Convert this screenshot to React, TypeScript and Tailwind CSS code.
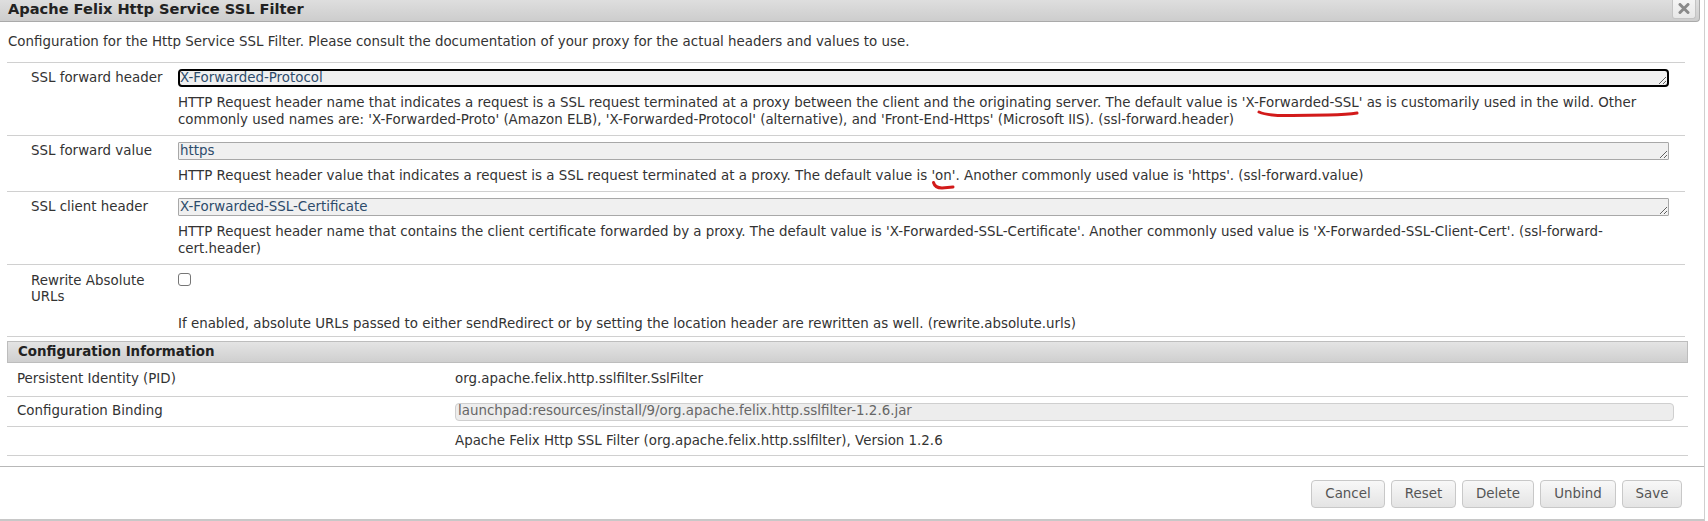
import React from 'react'

const font = "font-['DejaVu_Sans',Verdana,sans-serif]"

function Field({
  label,
  value,
  focused,
  children,
}: {
  label: string
  value: string
  focused?: boolean
  children: React.ReactNode
}) {
  return (
    <div className="flex border-b border-[#d0d0d0] pt-[6px] pb-[7px]">
      <div className="w-[171px] shrink-0 pl-[24px] leading-[17px]">{label}</div>
      <div className="flex-1 pr-[16px]">
        <textarea
          readOnly
          rows={1}
          value={value}
          className={
            focused
              ? 'block w-full h-[18px] resize-y overflow-hidden bg-[#f0f0f0] border-2 border-black rounded-[4px] px-0 py-0 leading-[14px] text-[13.4px] text-[#2d4b6b] outline-none ' + font
              : 'block w-full h-[18px] resize-y overflow-hidden bg-[#f0f0f0] border border-[#a8a8a8] rounded-[1px] pl-[1px] py-0 leading-[16px] text-[13.4px] text-[#2d4b6b] outline-none ' + font
          }
        />
        <div className="mt-[7px] leading-[17px]">{children}</div>
      </div>
    </div>
  )
}

function Mark({ children, kind }: { children: React.ReactNode; kind: 'long' | 'hook' }) {
  return (
    <span className="relative">
      {children}
      {kind === 'long' ? (
        <svg className="absolute left-[16px] top-[13px] w-[100px] h-[10px] overflow-visible" viewBox="0 0 100 10">
          <path d="M1 4 Q 10 8 34 7.5 L 70 7 Q 90 6.5 99 5" fill="none" stroke="#d21a1a" strokeWidth="3" strokeLinecap="round" />
        </svg>
      ) : (
        <svg className="absolute left-[1px] top-[13px] w-[24px] h-[10px] overflow-visible" viewBox="0 0 24 10">
          <path d="M1.5 1.5 Q 3 7 10 7 L 21 6" fill="none" stroke="#d21a1a" strokeWidth="3" strokeLinecap="round" />
        </svg>
      )}
    </span>
  )
}

function Btn({ children, w }: { children: React.ReactNode; w: string }) {
  return (
    <button
      className={
        'h-[28px] rounded-[4px] border border-[#c8c8c8] bg-gradient-to-b from-[#f8f8f8] to-[#e4e4e4] text-[13.4px] text-[#555] ' +
        w
      }
    >
      {children}
    </button>
  )
}

export default function App() {
  return (
    <div className={'w-[1708px] h-[521px] bg-white overflow-hidden text-[13.4px] text-[#333] ' + font}>
      <div className="w-[1705px] h-[521px] flex flex-col border-r border-[#cfcfcf] border-b-2 border-b-[#c8c8c8]">
        {/* title bar */}
        <div className="h-[22px] w-[1700px] shrink-0 flex justify-between bg-gradient-to-b from-[#dedede] to-[#cdcdcd] border-b border-r border-[#aaa] rounded-br-[4px]">
          <div className="pl-[8px] leading-[17px] text-[14.6px] font-bold text-[#222]">Apache Felix Http Service SSL Filter</div>
          <div className="mr-[3px] w-[24px] h-[19px] flex items-center justify-center rounded-b-[3px] border border-t-0 border-[#c4c4c4] bg-gradient-to-b from-[#f4f4f4] to-[#e8e8e8]">
            <svg width="12" height="11" viewBox="0 0 12 11" className="-mt-[2px]">
              <path d="M2 1.5 L10 9.5 M10 1.5 L2 9.5" stroke="#8a8a8a" strokeWidth="3" strokeLinecap="round" />
            </svg>
          </div>
        </div>

        {/* description */}
        <div className="pl-[8px] pt-[11px] leading-[17px]">
          Configuration for the Http Service SSL Filter. Please consult the documentation of your proxy for the actual headers and values to use.
        </div>

        {/* form */}
        <div className="mt-[12px] ml-[7px] w-[1678px] border-t border-[#d0d0d0]">
          <Field label="SSL forward header" value="X-Forwarded-Protocol" focused>
            HTTP Request header name that indicates a request is a SSL request terminated at a proxy between the client and the originating server. The default value is{' '}
            <Mark kind="long">'X-Forwarded-SSL'</Mark> as is customarily used in the wild. Other commonly used names are: 'X-Forwarded-Proto' (Amazon ELB), 'X-Forwarded-Protocol' (alternative), and 'Front-End-Https' (Microsoft IIS). (ssl-forward.header)
          </Field>
          <Field label="SSL forward value" value="https">
            HTTP Request header value that indicates a request is a SSL request terminated at a proxy. The default value is <Mark kind="hook">'on'</Mark>. Another commonly used value is 'https'. (ssl-forward.value)
          </Field>
          <Field label="SSL client header" value="X-Forwarded-SSL-Certificate">
            HTTP Request header name that contains the client certificate forwarded by a proxy. The default value is 'X-Forwarded-SSL-Certificate'. Another commonly used value is 'X-Forwarded-SSL-Client-Cert'. (ssl-forward-cert.header)
          </Field>
          <div className="flex border-b border-[#d0d0d0] pt-[8px] pb-[4px]">
            <div className="w-[171px] shrink-0 pl-[24px] pr-[20px] leading-[16px]">Rewrite Absolute URLs</div>
            <div className="flex-1 pr-[16px]">
              <div className="mt-0 w-[13px] h-[13px] rounded-[3px] border border-[#767676] bg-white" />
              <div className="mt-[29px] leading-[17px]">
                If enabled, absolute URLs passed to either sendRedirect or by setting the location header are rewritten as well. (rewrite.absolute.urls)
              </div>
            </div>
          </div>
        </div>

        {/* configuration information */}
        <div className="mt-[4px] ml-[7px] w-[1681px]">
          <div className="h-[22px] flex items-center pl-[10px] font-bold text-[#222] bg-gradient-to-b from-[#e4e4e4] to-[#cfcfcf] border border-[#bdbdbd]">
            Configuration Information
          </div>
          <div className="h-[34px] flex items-center border-b border-[#d0d0d0]">
            <div className="w-[448px] pl-[10px]">Persistent Identity (PID)</div>
            <div>org.apache.felix.http.sslfilter.SslFilter</div>
          </div>
          <div className="h-[30px] flex items-center border-b border-[#d0d0d0]">
            <div className="w-[448px] pl-[10px]">Configuration Binding</div>
            <div className="w-[1219px] h-[18px] flex items-center pl-[2px] rounded-[4px] border border-[#cfcfcf] bg-[#ededed] text-[#666]">
              launchpad:resources/install/9/org.apache.felix.http.sslfilter-1.2.6.jar
            </div>
          </div>
          <div className="h-[29px] flex items-center border-b border-[#d0d0d0]">
            <div className="w-[448px] pl-[10px]"></div>
            <div>Apache Felix Http SSL Filter (org.apache.felix.http.sslfilter), Version 1.2.6</div>
          </div>
        </div>

        {/* footer */}
        <div className="mt-[10px] border-t border-[#b8b8b8] flex justify-end gap-[6px] pt-[13px] pr-[22px]">
          <Btn w="w-[74px]">Cancel</Btn>
          <Btn w="w-[65px]">Reset</Btn>
          <Btn w="w-[72px]">Delete</Btn>
          <Btn w="w-[76px]">Unbind</Btn>
          <Btn w="w-[60px]">Save</Btn>
        </div>
      </div>
    </div>
  )
}
